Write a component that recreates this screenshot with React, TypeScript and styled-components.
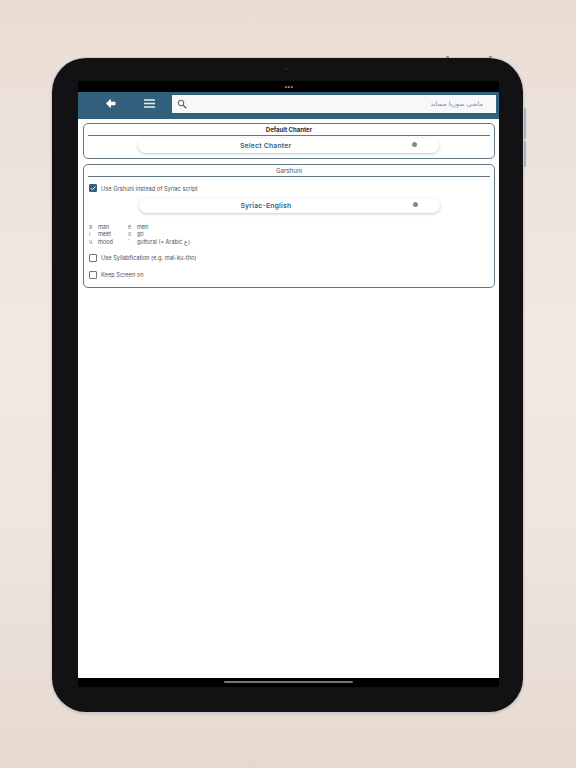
import { ReactNode } from 'react';
import styled, { createGlobalStyle } from 'styled-components';
import { Check } from 'lucide-react';

const GlobalStyle = createGlobalStyle`
  html, body {
    margin: 0;
    padding: 0;
    height: 100%;
  }
  body {
    font-family: 'Inter', 'Liberation Sans', sans-serif;
  }
`;

const colors = {
  teal: '#33617d',
  border: '#667a86',
  text: '#4c5257',
};

interface FieldProps {
  label: string;
  checked?: boolean;
}

const CheckField = ({ label, checked }: FieldProps): JSX.Element => (
  <FieldRow>
    <CheckBox $checked={checked}>
      {checked && <Check size={7} strokeWidth={4} color="#fff" />}
    </CheckBox>
    {label}
  </FieldRow>
);

const PickerButton = ({ children }: { children: ReactNode }): JSX.Element => (
  <Picker>
    <PickerLabel>{children}</PickerLabel>
    <PickerDot />
  </Picker>
);

const App = (): JSX.Element => (
  <Page>
    <GlobalStyle />
    <Tablet>
      <TopButton $left={394} />
      <TopButton $left={437} />
      <SideButton $top={50} $height={31} />
      <SideButton $top={83} $height={26} />
      <Bezel>
        <StatusBar>
          <CameraDot />
          <Dots>•••</Dots>
        </StatusBar>
        <Screen>
          <Header>
            <BackSlot>
              <svg width="11" height="11" viewBox="0 0 12 12">
                <path d="M6.4 0.8 L1 6 L6.4 11.2 L6.4 7.8 L11.4 7.8 L11.4 4.2 L6.4 4.2 Z" fill="#fff" />
              </svg>
            </BackSlot>
            <MenuSlot>
              <svg width="11" height="9" viewBox="0 0 11 9">
                <path d="M0 1h11M0 4.5h11M0 8h11" stroke="#e6eef3" strokeWidth="1.4" />
              </svg>
            </MenuSlot>
            <SearchBox>
              <svg width="10" height="10" viewBox="0 0 10 10">
                <circle cx="4" cy="4" r="2.8" fill="none" stroke="#555" strokeWidth="1" />
                <path d="M6.2 6.2 L9.2 9.2" stroke="#555" strokeWidth="1.3" />
              </svg>
              <SearchHint dir="rtl">ماضي سوريا مساند</SearchHint>
            </SearchBox>
          </Header>
          <Content>
            <Card>
              <CardTitle $bold>Default Chanter</CardTitle>
              <PickerWrap>
                <PickerButton>Select Chanter</PickerButton>
              </PickerWrap>
            </Card>
            <GarshuniCard>
              <CardTitle>Garshuni</CardTitle>
              <CardBody>
                <CheckField label="Use Grshuni instead of Syriac script" checked />
                <PickerWrap>
                  <PickerButton>Syriac-English</PickerButton>
                </PickerWrap>
                <Legend>
                  <LegendKey>a</LegendKey>
                  <span>man</span>
                  <LegendKey>e</LegendKey>
                  <span>men</span>
                  <LegendKey>i</LegendKey>
                  <span>meet</span>
                  <LegendKey>o</LegendKey>
                  <span>go</span>
                  <LegendKey>u</LegendKey>
                  <span>mood</span>
                  <LegendKey>'</LegendKey>
                  <span>guttural (= Arabic ع)</span>
                </Legend>
                <CheckField label="Use Syllabfication (e.g. mal-ku-tho)" />
                <CheckField label="Keep Screen on" />
              </CardBody>
            </GarshuniCard>
          </Content>
          <HomeIndicator />
        </Screen>
        <BottomBar />
      </Bezel>
    </Tablet>
  </Page>
);

const Page = styled.div`
  box-sizing: border-box;
  width: 576px;
  height: 768px;
  overflow: hidden;
  padding: 58px 53px 56px 52px;
  background: linear-gradient(180deg, #e9ddd3 0%, #f2e9e4 45%, #efe5de 70%, #e5d9cf 100%);
`;

const Tablet = styled.div`
  position: relative;
  height: 654px;
  border-radius: 34px;
  background: #121113;
  box-shadow: 0 0 0 1px #c9cfd4, 0 1px 3px rgba(90, 80, 70, 0.35);
`;

const TopButton = styled.div<{ $left: number }>`
  position: absolute;
  top: -2px;
  left: ${({ $left }) => $left}px;
  width: 3px;
  height: 2px;
  background: #8f969b;
`;

const SideButton = styled.div<{ $top: number; $height: number }>`
  position: absolute;
  top: ${({ $top }) => $top}px;
  right: -3px;
  width: 2px;
  height: ${({ $height }) => $height}px;
  background: #9fb6c4;
`;

const Bezel = styled.div`
  display: flex;
  flex-direction: column;
  height: 100%;
  box-sizing: border-box;
  padding: 23px 24px 0 26px;
`;

const StatusBar = styled.div`
  position: relative;
  display: flex;
  justify-content: center;
  align-items: center;
  height: 11px;
  background: #000;
`;

const CameraDot = styled.div`
  position: absolute;
  top: -13px;
  left: 207px;
  width: 2px;
  height: 2px;
  border-radius: 50%;
  background: #2b2d33;
`;

const Dots = styled.span`
  color: #b8b8b8;
  font-size: 6px;
  letter-spacing: -0.5px;
  line-height: 11px;
`;

const Screen = styled.div`
  position: relative;
  display: flex;
  flex-direction: column;
  height: 586px;
  background: #fff;
`;

const Header = styled.div`
  display: flex;
  align-items: center;
  height: 27px;
  padding: 2px 3px 6px 0;
  box-sizing: border-box;
  background: ${colors.teal};
`;

const BackSlot = styled.div`
  display: flex;
  justify-content: center;
  width: 65px;
`;

const MenuSlot = styled.div`
  display: flex;
  justify-content: center;
  width: 12px;
  margin-right: 17px;
`;

const SearchBox = styled.div`
  flex: 1;
  display: flex;
  align-items: center;
  justify-content: space-between;
  height: 18px;
  padding: 0 13px 0 5px;
  background: #f6f8fa;
`;

const SearchHint = styled.span`
  color: #8b8f93;
  font-family: 'DejaVu Sans', sans-serif;
  font-size: 6.5px;
`;

const Content = styled.div`
  display: flex;
  flex-direction: column;
  gap: 5px;
  padding: 4px 4px 0 5px;
`;

const Card = styled.section`
  height: 36px;
  box-sizing: border-box;
  padding: 1px 4px 0;
  border: 1px solid ${colors.border};
  border-radius: 5px;
`;

const GarshuniCard = styled(Card)`
  height: 124px;
`;

const CardTitle = styled.h3<{ $bold?: boolean }>`
  margin: 0;
  height: 10px;
  border-bottom: 1px solid ${colors.border};
  color: ${({ $bold }) => ($bold ? '#2c2f33' : colors.text)};
  font-size: ${({ $bold }) => ($bold ? 6 : 6.2)}px;
  font-weight: ${({ $bold }) => ($bold ? 700 : 400)};
  line-height: 10px;
  text-align: center;
`;

const PickerWrap = styled.div`
  display: flex;
  justify-content: center;
  padding-top: 2px;
`;

const Picker = styled.div`
  position: relative;
  display: flex;
  justify-content: flex-start;
  align-items: center;
  width: 301px;
  height: 15px;
  box-sizing: border-box;
  padding: 0 0 1px 102px;
  margin-left: -1px;
  border-radius: 8px;
  background: #fff;
  box-shadow: 0 1px 3px rgba(70, 70, 70, 0.3);
`;

const PickerLabel = styled.span`
  color: ${colors.teal};
  font-size: 6.8px;
  font-weight: 600;
  letter-spacing: 0.2px;
`;

const PickerDot = styled.div`
  position: absolute;
  right: 22px;
  top: 4px;
  width: 5px;
  height: 5px;
  border-radius: 50%;
  background: #85878b;
`;

const CardBody = styled.div`
  display: flex;
  flex-direction: column;
  padding: 3px 0 0 1px;
`;

const FieldRow = styled.label`
  display: flex;
  align-items: center;
  gap: 4px;
  height: 16px;
  color: ${colors.text};
  font-size: 5.7px;

  & + & {
    margin-top: 1px;
  }
`;

const CheckBox = styled.span<{ $checked?: boolean }>`
  display: flex;
  justify-content: center;
  align-items: center;
  flex: none;
  width: 8px;
  height: 8px;
  box-sizing: border-box;
  border-radius: 1px;
  border: 0.7px solid ${({ $checked }) => ($checked ? colors.teal : '#6f7478')};
  background: ${({ $checked }) => ($checked ? colors.teal : '#fff')};
`;

const Legend = styled.div`
  display: grid;
  grid-template-columns: 9px 30px 9px 1fr;
  grid-auto-rows: 7.5px;
  margin: 10.5px 0 3.5px;
  color: ${colors.text};
  font-size: 5.5px;
  line-height: 7.5px;
`;

const LegendKey = styled.span`
  color: #70757a;
`;

const HomeIndicator = styled.div`
  position: absolute;
  left: 146px;
  bottom: -5px;
  width: 129px;
  height: 2px;
  border-radius: 1px;
  background: #77777a;
  z-index: 1;
`;

const BottomBar = styled.div`
  height: 9px;
  background: #000;
`;

export default App;
